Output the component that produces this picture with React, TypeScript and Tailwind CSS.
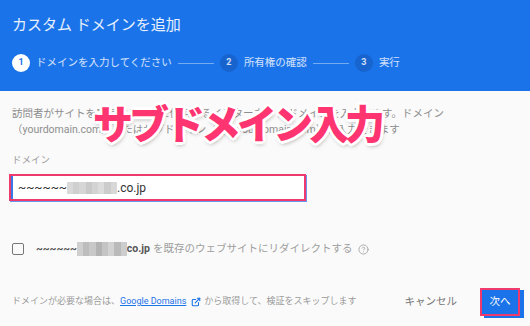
import { CircleHelp, ExternalLink } from "lucide-react";

// mosaic cells used for the blurred part of the domain
const inputCells = ["#d9d9d9", "#cfcfcf", "#d6d6d6", "#c9c9c9", "#d3d3d3", "#dcdcdc", "#cccccc", "#d8d8d8"];
const checkCells = ["#cfcfcf", "#bdbdbd", "#c8c8c8", "#b3b3b3", "#c4c4c4", "#d2d2d2", "#bababa", "#cdcdcd"];

function Mosaic({ cells, w, h }: { cells: string[]; w: number; h: number }) {
  return (
    <span className="inline-flex shrink-0 blur-[0.6px]" style={{ width: w, height: h }}>
      {cells.map((c, i) => (
        <span key={i} className="flex-1 h-full" style={{ background: c }} />
      ))}
    </span>
  );
}

function Step({ n, label, active }: { n: number; label: string; active?: boolean }) {
  return (
    <div className="flex items-center gap-[6px]">
      <div
        className={
          active
            ? "w-[18px] h-[18px] rounded-full bg-white text-[#1a73e8] text-[9px] font-bold flex items-center justify-center"
            : "w-[18px] h-[18px] rounded-full bg-[#1764cf] text-white/80 text-[9px] font-bold flex items-center justify-center"
        }
      >
        {n}
      </div>
      <span className="text-[10.5px] text-white/80 whitespace-nowrap">{label}</span>
    </div>
  );
}

export default function App() {
  return (
    <div className="relative w-[530px] h-[326px] overflow-hidden bg-[#fafafa] font-[Roboto,'Noto_Sans_CJK_JP',sans-serif]">
      <header className="h-[91px] bg-[#1a73e8] px-3 pt-[15px]">
        <h1 className="text-[15px] leading-[20px] text-white/90">カスタム ドメインを追加</h1>
        <div className="flex items-center gap-[6px] mt-[19px]">
          <Step n={1} label="ドメインを入力してください" active />
          <div className="w-[36px] h-px bg-white/40" />
          <Step n={2} label="所有権の確認" />
          <div className="w-[36px] h-px bg-white/40" />
          <Step n={3} label="実行" />
        </div>
      </header>

      <main className="px-3 pt-[15px]">
        <p className="text-[10.5px] leading-[16px] text-[#8e8e8e] whitespace-nowrap">
          訪問者がサイトを表示するときに使用するインターネット ドメインを入力します。ドメイン
          <br />
          （yourdomain.com）またはサブドメイン（app.yourdomain.com）を入力できます
        </p>

        <label className="block mt-[15px] text-[9.5px] leading-[14px] text-[#9b9b9b]">ドメイン</label>

        <div className="ml-[-3px] mt-[7px] w-[297px] h-[27px] border-2 border-[#ee3a6d] bg-white shadow-[1px_1px_0_#6a95ee] flex items-center">
          <div className="w-[2px] h-full bg-[#3b78e7]" />
          <div className="flex items-center pl-[5px] text-[12px] text-[#333]">
            <span>~~~~~~</span>
            <Mosaic cells={inputCells} w={50} h={12} />
            <span>.co.jp</span>
          </div>
        </div>

        <div className="flex items-center mt-[41px] h-[14px]">
          <div className="w-[12px] h-[12px] border-[1.5px] border-[#777] rounded-[2px]" />
          <div className="flex items-center ml-[12px] text-[10.5px]">
            <span className="font-bold text-[#555]">~~~~~~</span>
            <Mosaic cells={checkCells} w={50} h={14} />
            <span className="font-bold text-[#555]">co.jp</span>
            <span className="ml-[3px] text-[#9e9e9e]">を既存のウェブサイトにリダイレクトする</span>
            <CircleHelp size={11} strokeWidth={1.8} className="ml-[6px] text-[#9e9e9e]" />
          </div>
        </div>

        <div className="flex items-center mt-[31px] h-[29px] pr-[-2px]">
          <div className="flex items-center text-[9px] text-[#9a9a9a] whitespace-nowrap">
            <span>ドメインが必要な場合は、</span>
            <span className="text-[#1a73e8] underline">Google Domains</span>
            <ExternalLink size={10} strokeWidth={2.6} className="ml-[5px] text-[#1a73e8]" />
            <span className="ml-[3px]">から取得して、検証をスキップします</span>
          </div>
          <span className="ml-auto text-[10.5px] text-[#777]">キャンセル</span>
          <button className="ml-[23px] mr-[-2px] w-[40px] h-[28px] bg-[#1a73e8] border-2 border-[#ee3a6d] shadow-[4px_2px_0_#1a73e8] text-white text-[10.5px]">
            次へ
          </button>
        </div>
      </main>

      <div className="absolute left-[93px] top-[102px] text-[40px] leading-none font-black tracking-[-4px] text-[#ff3572] font-['Noto_Sans_CJK_JP',sans-serif] whitespace-nowrap [text-shadow:2px_0_0_#fff,-2px_0_0_#fff,0_2px_0_#fff,0_-2px_0_#fff,2px_2px_0_#fff,-2px_-2px_0_#fff,2px_-2px_0_#fff,-2px_2px_0_#fff,3px_0_0_#fff,-3px_0_0_#fff,0_3px_0_#fff,0_-3px_0_#fff,1px_3px_4px_rgba(0,0,0,0.35)]">
        サブドメイン入力
      </div>
    </div>
  );
}
